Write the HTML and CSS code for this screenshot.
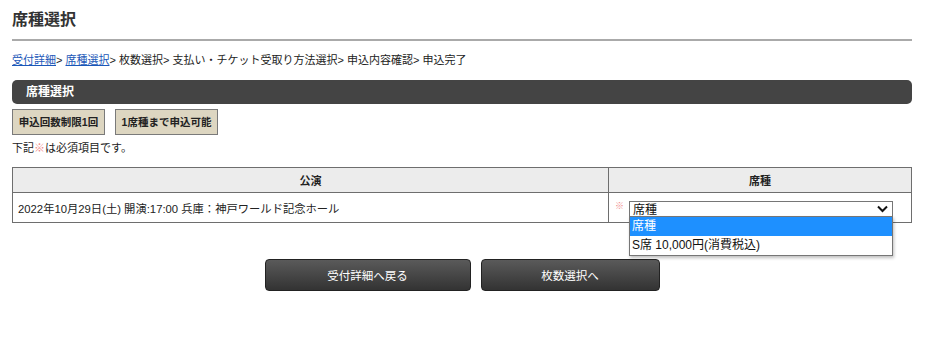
FILE: index.html
```html
<!DOCTYPE html>
<html lang="ja">
<head>
    <meta charset="UTF-8">
    <title>席種選択</title>
    <link rel="stylesheet" href="styles.css">
</head>
<body>
    <div class="container">
        <h1 class="page-title">席種選択</h1>

        <div class="breadcrumb">
            <a href="#">受付詳細</a>&gt; <a href="#">席種選択</a>&gt; 枚数選択&gt; 支払い・チケット受取り方法選択&gt; 申込内容確認&gt; 申込完了
        </div>

        <div class="section-bar">席種選択</div>

        <div class="badges">
            <span class="badge badge-limit">申込回数制限1回</span>
            <span class="badge badge-seat">1席種まで申込可能</span>
        </div>

        <p class="notice">下記<span class="req">※</span>は必須項目です。</p>

        <table class="seat-table">
            <thead>
                <tr>
                    <th class="col-show">公演</th>
                    <th>席種</th>
                </tr>
            </thead>
            <tbody>
                <tr>
                    <td>2022年10月29日(土) 開演:17:00 兵庫：神戸ワールド記念ホール</td>
                    <td class="seat-cell">
                        <span class="req mark">※</span>
                        <div class="select-wrap">
                            <div class="select">
                                <span>席種</span>
                                <svg class="caret" width="11" height="8" viewBox="0 0 11 8"><path d="M1 1.5 L5.5 6 L10 1.5" fill="none" stroke="#111" stroke-width="2"/></svg>
                            </div>
                            <ul class="options">
                                <li class="selected">席種</li>
                                <li>S席 10,000円(消費税込)</li>
                            </ul>
                        </div>
                    </td>
                </tr>
            </tbody>
        </table>

        <div class="actions">
            <button class="btn btn-back">受付詳細へ戻る</button>
            <button class="btn btn-next">枚数選択へ</button>
        </div>
    </div>
</body>
</html>
```

FILE: styles.css
```css
body {
    margin: 0;
    font-family: "Liberation Sans", "Noto Sans CJK JP", sans-serif;
    color: #333;
    background-color: #fff;
}

.container {
    width: 900px;
    padding: 0 12px;
}

.page-title {
    margin: 0;
    padding-top: 9px;
    padding-bottom: 8px;
    font-size: 16px;
    line-height: 22px;
    border-bottom: 2px solid #aaa;
}

.breadcrumb {
    margin-top: 11px;
    font-size: 11px;
    line-height: 16px;
    color: #222;
}

.breadcrumb a {
    color: #1a57b8;
}

.section-bar {
    margin-top: 12px;
    height: 24px;
    line-height: 24px;
    padding-left: 14px;
    background-color: #444;
    color: #fff;
    font-size: 12px;
    font-weight: bold;
    border-radius: 5px;
}

.badges {
    display: flex;
    gap: 10px;
    margin-top: 5px;
}

.badge {
    height: 24px;
    line-height: 24px;
    text-align: center;
    background-color: #ddd6c1;
    border: 1px solid #7a7a7a;
    font-size: 10.5px;
    font-weight: bold;
    color: #222;
}

.badge-limit {
    width: 91px;
}

.badge-seat {
    width: 101px;
}

.notice {
    margin: 5px 0 0;
    font-size: 11px;
    line-height: 16px;
    color: #222;
}

.req {
    color: #f08a8a;
}

.seat-table {
    margin-top: 11px;
    width: 900px;
    border-collapse: collapse;
    font-size: 11px;
    color: #222;
}

.seat-table th,
.seat-table td {
    border: 1px solid #6e6e6e;
}

.seat-table th {
    height: 24px;
    background-color: #ececec;
    font-weight: bold;
    padding: 0;
}

.col-show {
    width: 595px;
}

.seat-table td {
    height: 29px;
    padding: 0 5px;
    font-size: 11.3px;
}

.seat-cell {
    position: relative;
}

.seat-cell .mark {
    position: absolute;
    left: 6px;
    top: 6px;
    font-size: 9px;
}

.select-wrap {
    position: relative;
    margin-left: 15px;
    width: 264px;
}

.select {
    display: flex;
    justify-content: space-between;
    align-items: center;
    height: 14px;
    margin-top: 2px;
    padding: 0 3px;
    border: 1px solid #767676;
    font-size: 12px;
    color: #111;
    background-color: #fff;
}

.caret {
    margin-right: 1px;
}

.options {
    position: absolute;
    left: 0;
    top: 15px;
    width: 262px;
    margin: 0;
    padding: 0;
    list-style: none;
    border: 1px solid #767676;
    background-color: #fff;
    box-shadow: 1px 2px 3px rgba(0, 0, 0, 0.25);
    font-size: 12px;
    z-index: 2;
}

.options li {
    height: 19px;
    line-height: 19px;
    padding-left: 2px;
    color: #111;
}

.options li.selected {
    background-color: #1e90ff;
    color: #fff;
}

.actions {
    display: flex;
    justify-content: center;
    gap: 10px;
    margin-top: 36px;
}

.btn {
    height: 32px;
    border: 1px solid #222;
    border-radius: 4px;
    background: linear-gradient(#5a5a5a, #333);
    color: #fff;
    font-family: inherit;
    font-size: 11.5px;
    cursor: pointer;
}

.btn-back {
    width: 206px;
}

.btn-next {
    width: 179px;
}
```
